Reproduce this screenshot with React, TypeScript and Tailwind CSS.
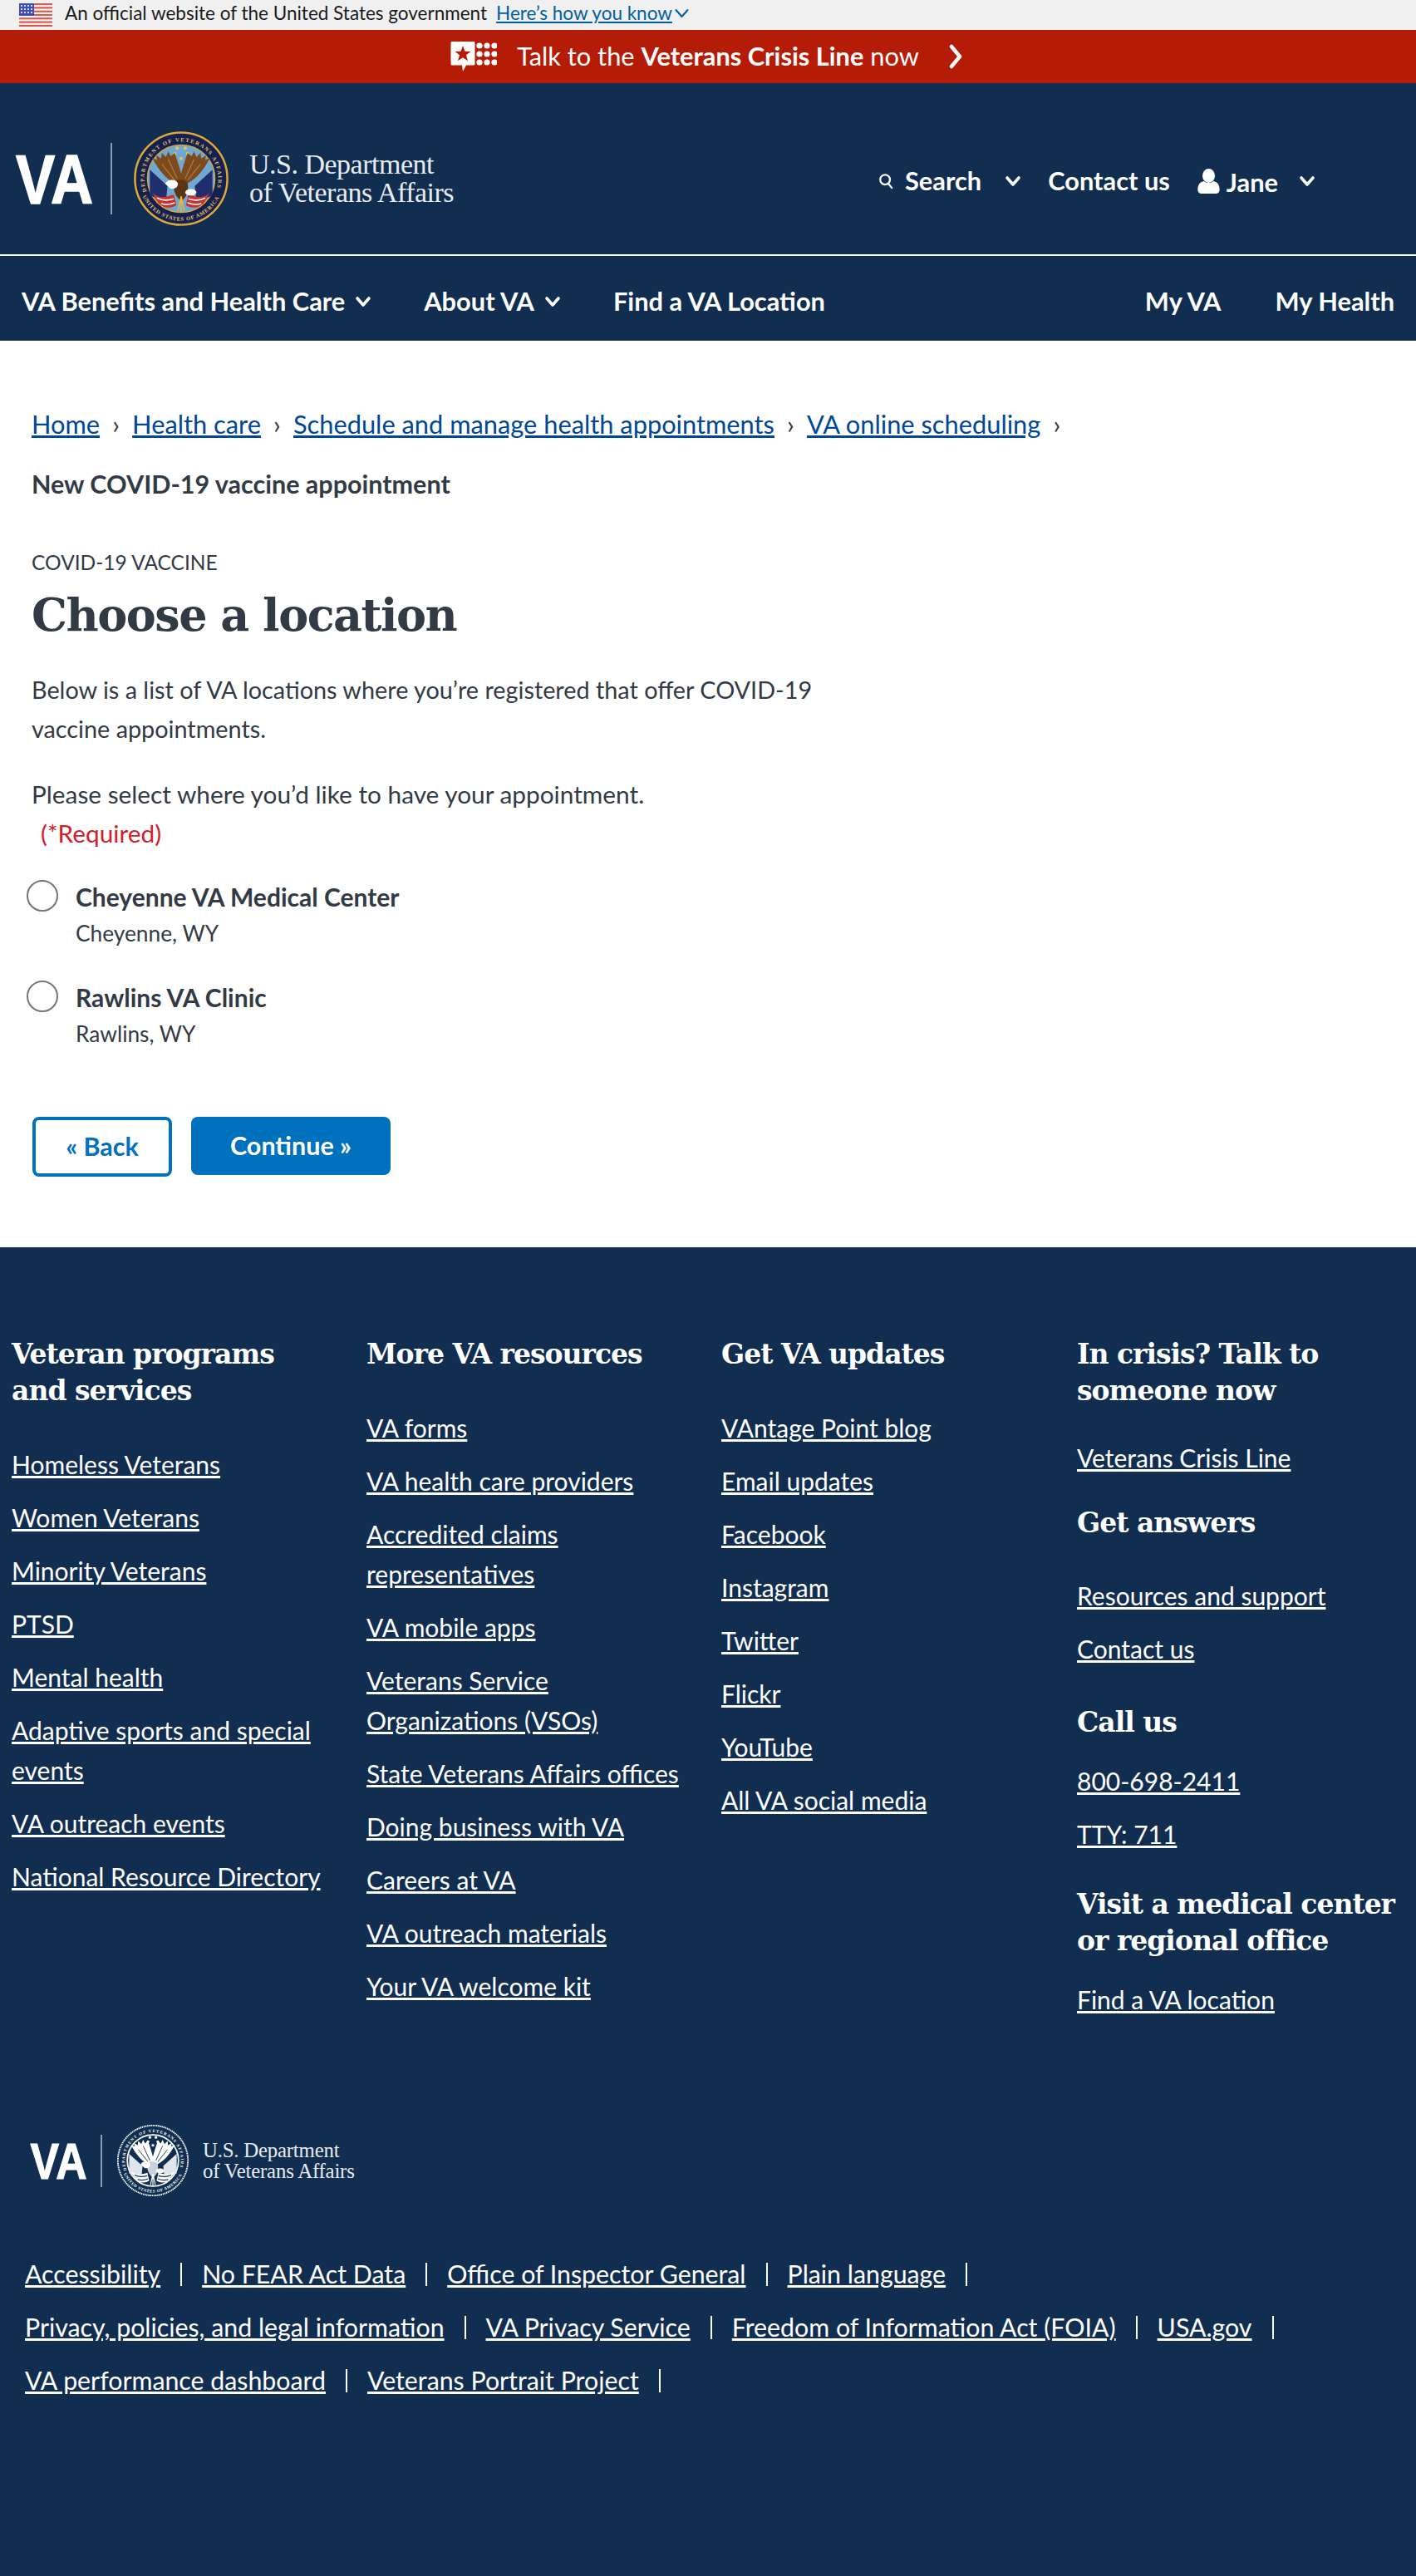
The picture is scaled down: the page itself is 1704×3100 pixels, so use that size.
const columns = [
  {
    title: ['Veteran programs', 'and services'],
    links: ['Homeless Veterans', 'Women Veterans', 'Minority Veterans', 'PTSD', 'Mental health', 'Adaptive sports and special events', 'VA outreach events', 'National Resource Directory'],
  },
  {
    title: ['More VA resources'],
    links: ['VA forms', 'VA health care providers', 'Accredited claims representatives', 'VA mobile apps', 'Veterans Service Organizations (VSOs)', 'State Veterans Affairs offices', 'Doing business with VA', 'Careers at VA', 'VA outreach materials', 'Your VA welcome kit'],
  },
  {
    title: ['Get VA updates'],
    links: ['VAntage Point blog', 'Email updates', 'Facebook', 'Instagram', 'Twitter', 'Flickr', 'YouTube', 'All VA social media'],
  },
];

const bottomRows = [
  ['Accessibility', 'No FEAR Act Data', 'Office of Inspector General', 'Plain language'],
  ['Privacy, policies, and legal information', 'VA Privacy Service', 'Freedom of Information Act (FOIA)', 'USA.gov'],
  ['VA performance dashboard', 'Veterans Portrait Project'],
];

function Chevron({ className, weight = 3.6 }: { className: string; weight?: number }) {
  return (
    <svg viewBox="0 0 20 14" className={className} fill="none" stroke="currentColor" strokeWidth={weight} strokeLinecap="round" strokeLinejoin="round">
      <path d="M3 3l7 8 7-8" />
    </svg>
  );
}

function Flag() {
  const stripes = [0, 1, 2, 3, 4, 5, 6];
  return (
    <svg viewBox="0 0 40 28" className="w-10 h-7">
      <rect width="40" height="28" fill="#fff" />
      {stripes.map((i) => (
        <rect key={i} y={i * 4.3} width="40" height="2.2" fill="#d8594e" />
      ))}
      <rect width="18" height="15" fill="#3c4fb0" />
      {[2, 6, 10, 14].map((x) =>
        [3, 7, 11].map((y) => <circle key={`${x}-${y}`} cx={x + 1} cy={y} r="1" fill="#fff" />)
      )}
    </svg>
  );
}

function CrisisIcon() {
  return (
    <svg viewBox="0 0 56 36" className="w-14 h-9">
      <path d="M2 0h26a1.5 1.5 0 0 1 1.5 1.5V27a1.5 1.5 0 0 1-1.5 1.500H19L15 36l-1-7.500H2A1.500 1.500 0 0 1 .5 27V1.500A1.500 1.500 0 0 1 2 0z" fill="#fff" />
      <path d="M15 5l2.500 6.800 7 .2-5.500 4.300 2 6.900-6-4-6 4 2-6.900L5.500 12l7-.2z" fill="#b51c08" />
      {[35, 44, 53].map((x) =>
        [5, 15, 25].map((y) => <circle key={`${x}-${y}`} cx={x} cy={y} r="3.600" fill="#fff" />)
      )}
    </svg>
  );
}

// simplified VA seal, colour in the header and white in the footer
function Seal({ mono, id, className }: { mono?: boolean; id: string; className: string }) {
  const navy = '#112e51';
  const wing = mono ? '#ffffff' : '#7d4a1e';
  const feather = mono ? navy : '#b57a3e';
  const body = mono ? '#c9d2dc' : '#5c3413';
  const field = mono ? navy : '#6fa8d0';
  const ring = mono ? navy : '#16204f';
  const edge = mono ? '#ffffff' : '#d9a93a';
  const textColor = mono ? '#ffffff' : '#e3c46a';
  const flag = mono ? '#dfe5ec' : '#1f2f6e';
  const red = mono ? '#ffffff' : '#c9312c';
  return (
    <svg viewBox="0 0 120 120" className={className}>
      <defs>
        <path id={`${id}-top`} d="M17 76A46 46 0 1 1 103 76" />
        <path id={`${id}-bottom`} d="M12 82A53 53 0 0 0 108 82" />
      </defs>
      <circle cx="60" cy="60" r="59.500" fill={ring} />
      <circle cx="60" cy="60" r="57.500" fill="none" stroke={edge} strokeWidth="2.600" strokeDasharray={mono ? '2 1' : undefined} />
      <circle cx="60" cy="60" r="42" fill={field} stroke={edge} strokeWidth={mono ? 2.4 : 1.4} />
      <text fontFamily="Liberation Serif, serif" fontWeight="700" fontSize="6.800" fill={textColor}>
        <textPath href={`#${id}-top`} textLength="172">DEPARTMENT OF VETERANS AFFAIRS</textPath>
      </text>
      <text fontFamily="Liberation Serif, serif" fontWeight="700" fontSize="6.800" fill={textColor}>
        <textPath href={`#${id}-bottom`} textLength="118">UNITED STATES OF AMERICA</textPath>
      </text>
      <g fill={mono ? '#fff' : '#e8c25a'}>
        <circle cx="55" cy="22" r="2.200" />
        <circle cx="65" cy="22" r="2.200" />
        <circle cx="52" cy="29" r="2.200" />
        <circle cx="68" cy="29" r="2.200" />
        <circle cx="60" cy="35" r="2.200" />
      </g>
      {/* flags */}
      <path d="M21 49l22 20-2 20-20-8z" fill={flag} />
      <path d="M99 49L77 69l2 20 20-8z" fill={flag} />
      <path d="M25 78c10 8 18 4 26 2l3 13c-10 6-22 4-29-15zM95 78c-10 8-18 4-26 2l-3 13c10 6 22 4 29-15z" fill={red} />
      <path d="M30 84c8 4 14 3 21 1M90 84c-8 4-14 3-21 1M35 91c6 2 12 1 17-1M85 91c-6 2-12 1-17-1" stroke={mono ? navy : '#fff'} strokeWidth="1.600" fill="none" />
      {/* wings */}
      <path d="M58 68C50 66 36 58 24 34l6 3-1-6 6 4 1-7 5 5 3-7 3 6 5-4c4 12 8 24 10 34z" fill={wing} />
      <path d="M62 68c8-2 22-10 34-34l-6 3 1-6-6 4-1-7-5 5-3-7-3 6-5-4c-4 12-8 24-10 34z" fill={wing} />
      <path d="M36 42l16 20M44 36l11 24M84 42L68 62M76 36L65 60" stroke={feather} strokeWidth="1.200" fill="none" />
      {/* body and head */}
      <path d="M50 64c4-4 16-4 18 2 2 10-2 18-8 22-6-4-10-12-10-24z" fill={body} />
      <path d="M40 66c4-6 14-6 16 0 0 6-6 8-10 6-2-2-4-4-6-6z" fill="#fff" />
      <ellipse cx="72" cy="77" rx="7" ry="4" fill="#fff" />
      <path d="M60 82l-4 18M60 82l4 18M60 82v20" stroke={mono ? '#fff' : '#e6b93e'} strokeWidth="1.600" fill="none" />
    </svg>
  );
}

function VaMark({ className }: { className: string }) {
  return (
    <svg viewBox="0 0 93 60" className={`overflow-visible ${className}`}>
      <text x="0" y="60" fontFamily="Liberation Sans, sans-serif" fontWeight="700" fontSize="84" fill="#fff" textLength={93} lengthAdjust="spacingAndGlyphs" stroke="#fff" strokeWidth="1.500">
        VA
      </text>
    </svg>
  );
}

function Crumb({ label }: { label: string }) {
  return (
    <>
      <a className="underline text-[#004795] underline-offset-2">{label}</a>
      <span className="w-[39px] text-center text-[#323a45]">›</span>
    </>
  );
}

function Radio({ name, city }: { name: string; city: string }) {
  return (
    <div className="flex h-[121px]">
      <span className="w-[38px] h-[38px] rounded-full border-2 border-[#71767a] bg-white ml-[-6px] mr-[21px] mt-[2px] shrink-0" />
      <div className="text-[#323a45]">
        <div className="font-bold leading-[44px] text-[30px]">{name}</div>
        <div className="leading-[44px] text-[26.300px]">{city}</div>
      </div>
    </div>
  );
}

function FooterHeading({ lines, className }: { lines: string[]; className: string }) {
  return (
    <h3 className={`font-['DejaVu_Serif',serif] font-bold text-[33px] leading-[44px] tracking-[-1px] text-white ${className}`}>
      {lines.map((line) => (
        <div key={line}>{line}</div>
      ))}
    </h3>
  );
}

function FooterLinks({ links }: { links: string[] }) {
  return (
    <ul className="flex flex-col gap-4">
      {links.map((link) => (
        <li key={link} className="leading-[48px]">
          <a className="underline underline-offset-2">{link}</a>
        </li>
      ))}
    </ul>
  );
}

export default function App() {
  return (
    <div className="w-[1704px] h-[3100px] overflow-hidden bg-white font-['Lato',sans-serif] text-[30px] text-[#323a45]">
      {/* gov banner */}
      <div className="h-9 bg-[#f0f0f0] flex items-center pl-[23px] text-[22.500px] text-[#1b1b1b]">
        <Flag />
        <span className="ml-[15px] pb-1">An official website of the United States government</span>
        <a className="ml-[11px] pb-1 underline text-[#005ea2]">Here’s how you know</a>
        <Chevron className="w-[21px] h-[14px] text-[#005ea2] ml-px mb-1" weight={2} />
      </div>

      {/* crisis line */}
      <div className="h-16 bg-[#b51c08] text-white flex items-center pl-[542px]">
        <CrisisIcon />
        <span className="ml-6 text-[30.800px] font-normal whitespace-pre">
          Talk to the <b>Veterans Crisis Line</b> now
        </span>
        <svg viewBox="0 0 16 30" className="w-4 h-[30px] ml-[36px]" fill="none" stroke="#fff" strokeWidth="4.500" strokeLinecap="round" strokeLinejoin="round">
          <path d="M3 3l10 12L3 27" />
        </svg>
      </div>

      {/* header */}
      <header className="bg-[#112e51] text-white">
        <div className="h-[206px] flex items-center pl-[19px] pt-6 font-bold text-[30.800px]">
          <div className="flex items-center w-[1038px] font-normal">
            <VaMark className="w-[93px] h-[60px]" />
            <span className="w-0.5 h-[86px] bg-[#8c9bb0] ml-[21px] mr-[25px]" />
            <Seal id="head" className="w-[116px] h-[116px]" />
            <div className="ml-6 font-['Liberation_Serif',serif] text-[34px] leading-[34px] tracking-[-0.5px] text-[#e8ecf1]">
              <div>U.S. Department</div>
              <div>of Veterans Affairs</div>
            </div>
          </div>
          <div className="flex items-center mt-[6px]">
            <svg viewBox="0 0 20 22" className="w-[18px] h-5" fill="none" stroke="#fff" strokeWidth="2.500" strokeLinecap="round">
              <circle cx="9" cy="9" r="6.500" />
              <path d="M14 15l4 5" />
            </svg>
            <span className="ml-[14px]">Search</span>
            <Chevron className="w-[20px] h-[14px] ml-[28px]" />
            <span className="ml-[32px]">Contact us</span>
            <svg viewBox="0 0 28 32" className="w-[27px] h-[30px] ml-[33px]" fill="#fff">
              <ellipse cx="14" cy="9" rx="8" ry="9" />
              <path d="M0 27c0-7 3-10 8-11 3 3 9 3 12 0 5 1 8 4 8 11 0 3-2 5-4 5H4c-2 0-4-2-4-5z" />
            </svg>
            <span className="ml-2 mt-1">Jane</span>
            <Chevron className="w-[20px] h-[14px] ml-[25px]" />
          </div>
        </div>
        <div className="h-0.5 bg-white" />
        <nav className="h-[102px] flex items-center pl-[26px] pr-[26px] pt-2 font-bold text-[30.800px]">
          <span>VA Benefits and Health Care</span>
          <Chevron className="w-[20px] h-[14px] ml-3" />
          <span className="ml-[63px]">About VA</span>
          <Chevron className="w-[20px] h-[14px] ml-3" />
          <span className="ml-[63px]">Find a VA Location</span>
          <span className="ml-auto">My VA</span>
          <span className="ml-[65px]">My Health</span>
        </nav>
      </header>

      {/* main */}
      <main className="h-[1091px] pl-[38px] pt-[78px]">
        <div className="flex items-center leading-[46px] text-[30.800px]">
          <Crumb label="Home" />
          <Crumb label="Health care" />
          <Crumb label="Schedule and manage health appointments" />
          <Crumb label="VA online scheduling" />
        </div>
        <div className="font-bold mt-[25px] leading-[46px] text-[30.500px]">New COVID-19 vaccine appointment</div>
        <div className="mt-[52px] text-[24.500px] leading-[40px]">COVID-19 VACCINE</div>
        <h1 className="font-['DejaVu_Serif',serif] font-bold text-[54px] leading-[72px] tracking-[-1.500px] mt-[7px]">Choose a location</h1>
        <p className="w-[965px] mt-[31px] leading-[47px] text-[28.800px]">
          Below is a list of VA locations where you’re registered that offer COVID-19 vaccine appointments.
        </p>
        <p className="mt-[31px] leading-[47px] text-[29.800px]">Please select where you’d like to have your appointment.</p>
        <p className="ml-[11px] leading-[47px] text-[29.800px] text-[#d0202a]">(*Required)</p>
        <div className="mt-[31px]">
          <Radio name="Cheyenne VA Medical Center" city="Cheyenne, WY" />
          <Radio name="Rawlins VA Clinic" city="Rawlins, WY" />
        </div>
        <div className="flex items-start mt-[45px] ml-px font-bold text-[30.500px]">
          <button className="w-[168px] h-[72px] rounded-lg border-4 border-[#0071bc] text-[#0071bc]">« Back</button>
          <button className="w-[240px] h-[70px] ml-[23px] rounded-lg bg-[#0071bc] text-white">Continue »</button>
        </div>
      </main>

      {/* footer */}
      <footer className="h-[1599px] bg-[#112e51] text-white">
        <div className="grid grid-cols-[repeat(4,427px)] pl-[14px] pt-[107px] h-[1038px]">
          {columns.map((col) => (
            <div key={col.title[0]} className="pr-[30px]">
              <FooterHeading lines={col.title} className="mb-[42px]" />
              <FooterLinks links={col.links} />
            </div>
          ))}
          <div className="ml-px">
            <FooterHeading lines={['In crisis? Talk to', 'someone now']} className="mb-[34px]" />
            <FooterLinks links={['Veterans Crisis Line']} />
            <FooterHeading lines={['Get answers']} className="mt-[33px] mb-[41px]" />
            <FooterLinks links={['Resources and support', 'Contact us']} />
            <FooterHeading lines={['Call us']} className="mt-[43px] mb-[24px]" />
            <FooterLinks links={['800-698-2411', 'TTY: 711']} />
            <FooterHeading lines={['Visit a medical center', 'or regional office']} className="mt-[39px] mb-[24px]" />
            <FooterLinks links={['Find a VA location']} />
          </div>
        </div>
        <div className="flex items-center pl-[36px] h-[88px] mt-[17px]">
          <VaMark className="w-[69px] h-[44px]" />
          <span className="w-0.5 h-[63px] bg-[#8c9bb0] ml-4 mr-[17px]" />
          <Seal mono id="foot" className="w-[88px] h-[88px]" />
          <div className="ml-4 font-['Liberation_Serif',serif] text-[24.800px] leading-[25px] tracking-[-0.2px] text-[#e8ecf1]">
            <div>U.S. Department</div>
            <div>of Veterans Affairs</div>
          </div>
        </div>
        <div className="pl-[30px] mt-[69px] flex flex-col gap-4 text-[30.300px]">
          {bottomRows.map((row) => (
            <div key={row[0]} className="flex items-center h-12">
              {row.map((link) => (
                <span key={link} className="flex items-center">
                  <a className="underline underline-offset-2">{link}</a>
                  <span className="w-0.5 h-7 bg-white mx-6" />
                </span>
              ))}
            </div>
          ))}
        </div>
      </footer>
    </div>
  );
}
